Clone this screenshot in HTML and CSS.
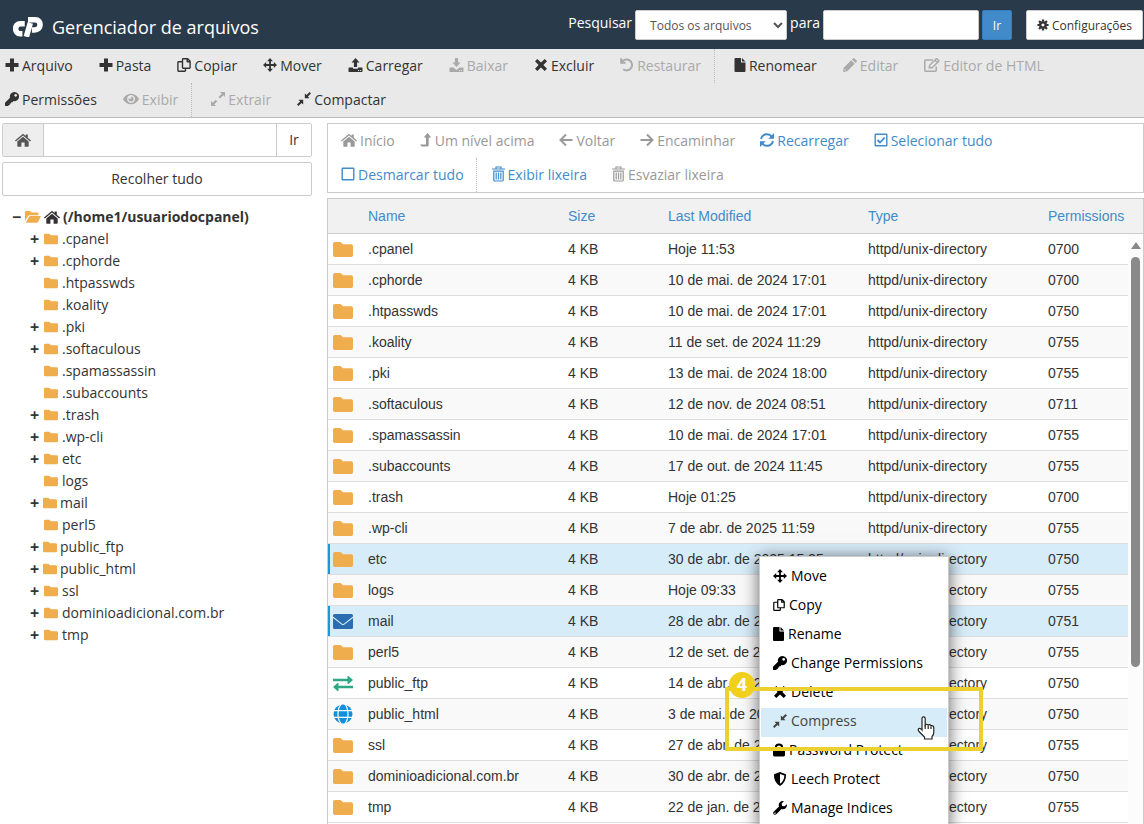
FILE: index.html
```html
<!DOCTYPE html>
<html lang="pt-BR">
<head>
<meta charset="UTF-8">
<meta name="viewport" content="width=device-width, initial-scale=1.0">
<title>Gerenciador de arquivos</title>
<link rel="stylesheet" href="styles.css">
</head>
<body>
<svg class="sprite" aria-hidden="true">
  <symbol id="plus" viewBox="0 0 14 14"><path d="M5 .5h4V5h4.500v4H9v4.500H5V9H.5V5H5z"/></symbol>
  <symbol id="copy" viewBox="0 0 14 14"><path fill="none" stroke="currentColor" stroke-width="1.400" stroke-linejoin="round" d="M7.500.8h3.200l2.400 2.400v6.300q0 .7-.7.700H6.200q-.7 0-.7-.7V1.500Q5.500.8 6.200.8zM10.200.9v2.800H13M5.200 3.800H1.600q-.7 0-.7.700v8q0 .7.700.700h6.200q.7 0 .7-.7v-2"/></symbol>
  <symbol id="move" viewBox="0 0 14 14"><path d="M7 0l2.900 3.200H7.900v2.900h2.900V4.100L14 7l-3.200 2.900V7.900H7.900v2.900h2L7 14l-2.900-3.200h2V7.900H3.200v2L0 7l3.200-2.900v2h2.900V3.200h-2z"/></symbol>
  <symbol id="upload" viewBox="0 0 14 14"><path d="M7 0l4 4.400H8.600V9H5.400V4.400H3zM0 10.200q0-.7.700-.7h3.700v.6q0 .7.700.7h3.800q.7 0 .7-.7v-.6h3.700q.7 0 .7.700v3.100q0 .7-.7.700H.7q-.7 0-.7-.7zM9.600 12v1h1v-1zm2 0v1h1v-1z"/></symbol>
  <symbol id="download" viewBox="0 0 14 14"><path d="M5.400 0h3.200v4.500H11L7 9 3 4.500h2.400zM0 10.200q0-.7.700-.7h3.200L7 12l3.100-2.500h3.200q.7 0 .7.700v3.100q0 .7-.7.700H.7q-.7 0-.7-.7zM9.600 12v1h1v-1zm2 0v1h1v-1z"/></symbol>
  <symbol id="times" viewBox="0 0 14 14"><path d="M1 3.300L3.300 1 7 4.600 10.700 1 13 3.300 9.400 7l3.600 3.700-2.300 2.300L7 9.400 3.300 13 1 10.700 4.600 7z"/></symbol>
  <symbol id="undo" viewBox="0 0 14 14"><path fill="none" stroke="currentColor" stroke-width="2" d="M1.200.3v4.400h4.400M1.600 4.500A5.500 5.500 0 1 1 3.200 11.300"/></symbol>
  <symbol id="file" viewBox="0 0 11 14"><path d="M1 0h5.500v4.500H11V13q0 1-1 1H1q-1 0-1-1V1q0-1 1-1zm6.500 0l3.500 3.500H7.500z"/></symbol>
  <symbol id="pencil" viewBox="0 0 14 14"><path d="M8.200 2.200l3.600 3.600-7.600 7.500L0 14l.7-4.200zM9 1.400L10 .4q.8-.7 1.600 0l2 2q.7.8 0 1.600l-1 1zM1.700 10.900l-.3 1.700 1.700-.3z"/></symbol>
  <symbol id="edit" viewBox="0 0 16 14"><path fill="none" stroke="currentColor" stroke-width="1.500" d="M9 2H1.800q-1 0-1 1v9.300q0 1 1 1h9.400q1 0 1-1V8.500M5.300 9.700l.4-2.400L12 1q.6-.5 1.200 0l1.300 1.300q.5.600 0 1.200L8.100 9.700zM11 2.300l2.500 2.500"/></symbol>
  <symbol id="key" viewBox="0 0 14 14"><path fill-rule="evenodd" d="M9.400 0a4.600 4.600 0 1 1-.9 9.100l-1 1.100H6.200v1.400H4.800V13H3.500v1H.6q-.6 0-.6-.6v-2.600l5-5A4.600 4.600 0 0 1 9.400 0zm1.200 2a1.400 1.400 0 1 0 .1 0z"/></symbol>
  <symbol id="eye" viewBox="0 0 16 14"><path fill-rule="evenodd" d="M8 1.700c3.600 0 6.500 2.200 8 5.300-1.500 3.100-4.400 5.300-8 5.300S1.500 10.100 0 7c1.500-3.100 4.400-5.300 8-5.300zm0 1.400a3.900 3.900 0 1 0 .1 0zM8 4.500a2.500 2.500 0 1 1-2.400 1.800A1.300 1.300 0 0 0 8 4.500z"/></symbol>
  <symbol id="expand" viewBox="0 0 14 14"><path d="M9 0h5v5l-1.700-1.700-3.200 3.200-1.600-1.600 3.200-3.200zM5 14H0V9l1.700 1.700 3-3 1.600 1.600-3 3z"/></symbol>
  <symbol id="compress" viewBox="0 0 14 14"><path d="M7.800 6.200V1.500l1.700 1.600L12.600 0 14 1.400l-3.100 3.100 1.600 1.700zM6.200 7.800v4.700l-1.700-1.600L1.400 14 0 12.600l3.100-3.100-1.600-1.700z"/></symbol>
  <symbol id="home" viewBox="0 0 16 14"><path d="M8 .7l2.600 2.200V1.500h2.200v3.200L16 7.500l-.9 1L8 2.500l-7.100 6-.9-1zM8 3.700l5.700 4.800V13q0 .7-.7.700H9.600V9.500H6.400v4.200H3q-.7 0-.7-.7V8.500z"/></symbol>
  <symbol id="gear" viewBox="0 0 14 14"><path fill="none" stroke="currentColor" stroke-width="3" d="M7 3.700a3.300 3.300 0 1 1-.1 0z"/><path fill="none" stroke="currentColor" stroke-width="2.600" d="M7 .5v2.200M7 11.300v2.200M.5 7h2.200M11.300 7h2.200M2.400 2.400L4 4M10 10l1.600 1.600M2.400 11.600L4 10M10 4l1.600-1.600"/></symbol>
  <symbol id="level-up" viewBox="0 0 12 14"><path d="M7.500 0l3.800 4.400H8.700V12q0 1.500-1.500 1.500H1.500L0 11.500h6V4.400H3.700z"/></symbol>
  <symbol id="left" viewBox="0 0 14 14"><path fill="none" stroke="currentColor" stroke-width="2" d="M13.500 7H2M7 1.500L1.500 7 7 12.500"/></symbol>
  <symbol id="right" viewBox="0 0 14 14"><path fill="none" stroke="currentColor" stroke-width="2" d="M.5 7H12M7 1.500L12.500 7 7 12.500"/></symbol>
  <symbol id="refresh" viewBox="0 0 14 14"><path fill="none" stroke="currentColor" stroke-width="2" d="M1 6a6 6 0 0 1 10.800-2.200M13 8a6 6 0 0 1-10.800 2.200"/><path d="M14 0v5.800H8.300zM0 14V8.200h5.700z"/></symbol>
  <symbol id="check" viewBox="0 0 14 14"><path fill="none" stroke="currentColor" stroke-width="1.400" d="M1.800 1.200h10.400q.6 0 .6.600v10.400q0 .6-.6.600H1.800q-.6 0-.6-.6V1.800q0-.6.600-.6z"/><path fill="none" stroke="currentColor" stroke-width="1.800" d="M3.500 7l2.500 2.500 4.700-5"/></symbol>
  <symbol id="square" viewBox="0 0 14 14"><path fill="none" stroke="currentColor" stroke-width="1.400" d="M1.800 1.200h10.400q.6 0 .6.600v10.400q0 .6-.6.600H1.800q-.6 0-.6-.6V1.800q0-.6.600-.6z"/></symbol>
  <symbol id="trash" viewBox="0 0 13 16"><path fill="none" stroke="currentColor" stroke-width="1.200" d="M0 3h13M4 3V1h5v2M1.800 5.200h9.400V14q0 1-1 1H2.800q-1 0-1-1zM4.200 6.500v7M6.500 6.500v7M8.800 6.500v7"/></symbol>
  <symbol id="folder" viewBox="0 0 20 15"><path d="M1.800 0h5.700l2.500 2.200h8.200Q20 2.200 20 4v9.200q0 1.800-1.800 1.800H1.800Q0 15 0 13.200V1.800Q0 0 1.800 0z"/></symbol>
  <symbol id="folder-open" viewBox="0 0 16 12"><path d="M1.200 0h4l1.600 1.600h5.400q1.200 0 1.200 1.200v1.400H4.600q-1 0-1.500.8L0 9.800V1.200Q0 0 1.200 0zM4.600 5H16l-3 6q-.5.800-1.300.800H.8z"/></symbol>
  <symbol id="envelope" viewBox="0 0 20 15"><path d="M1.500 0h17Q20 0 20 1.500v1L10.800 9.700q-.8.600-1.600 0L0 2.500v-1Q0 0 1.500 0zM0 4l8.500 6.600q1.500 1 3 0L20 4v9.500q0 1.500-1.500 1.500h-17Q0 15 0 13.500z"/></symbol>
  <symbol id="exchange" viewBox="0 0 20 15"><path d="M0 2.700h14.500V0h1L20 4l-4.500 4h-1V5.200H0zM20 9.800H5.500V7h-1L0 11l4.500 4h1v-2.700H20z"/></symbol>
  <symbol id="globe" viewBox="0 0 20 20"><circle cx="10" cy="10" r="9.500"/><path fill="none" stroke="#fff" stroke-width="1.200" d="M0 6.700h20M0 13.300h20M8 .3C4 5 4 15 8 19.700M12 .3C16 5 16 15 12 19.700"/></symbol>
  <symbol id="lock" viewBox="0 0 13 14"><path fill-rule="evenodd" d="M1.700 6H2V4.300a4.500 4.300 0 0 1 9 0V6h.3Q13 6 13 7.500v5q0 1.500-1.500 1.500h-10Q0 14 0 12.500v-5Q0 6 1.700 6zm2.500 0h4.600V4.300a2.300 2.200 0 0 0-4.600 0z"/></symbol>
  <symbol id="shield" viewBox="0 0 14 14"><path fill-rule="evenodd" d="M7 0l6 2.300q.4 8-6 11.700Q.6 10.300 1 2.300zm0 2v9.800Q11.300 9 11.300 3.600z"/></symbol>
  <symbol id="wrench" viewBox="0 0 14 14"><path fill-rule="evenodd" d="M13.800 3.200A4 4 0 0 1 8.600 8L3.300 13.300A1.850 1.850 0 0 1 .7 10.700L6 5.400A4 4 0 0 1 10.900.2L8.700 2.500l.3 2.400 2.500.3zM1.900 11.500a.7.7 0 1 0 .1 0z"/></symbol>
</svg>

<header class="header">
  <h1 class="brand">
    <svg class="logo" viewBox="0 0 92 60" aria-hidden="true"><path d="M36 20H23C13 20 8 27 8 35S14 51 21 51H29"/><path d="M41 60L53 18M46 8H68C79 8 83 15 83 23S77 39 66 39H58"/></svg>
    Gerenciador de arquivos
  </h1>
  <form class="search">
    <label for="scope">Pesquisar</label>
    <select id="scope" class="field scope"><option>Todos os arquivos</option></select>
    <label for="query">para</label>
    <input type="text" id="query" class="field query">
    <button type="button" class="btn-go">Ir</button>
    <button type="button" class="field settings"><svg class="icon-sm"><use href="#gear"/></svg>Configurações</button>
  </form>
</header>

<nav class="toolbar actions">
  <button><svg><use href="#plus"/></svg>Arquivo</button>
  <button><svg><use href="#plus"/></svg>Pasta</button>
  <button><svg><use href="#copy"/></svg>Copiar</button>
  <button><svg><use href="#move"/></svg>Mover</button>
  <button><svg class="icon-lg"><use href="#upload"/></svg>Carregar</button>
  <button disabled><svg class="icon-lg"><use href="#download"/></svg>Baixar</button>
  <button><svg><use href="#times"/></svg>Excluir</button>
  <button disabled class="divider"><svg><use href="#undo"/></svg>Restaurar</button>
  <button><svg class="icon-sm"><use href="#file"/></svg>Renomear</button>
  <button disabled><svg><use href="#pencil"/></svg>Editar</button>
  <button disabled><svg class="icon-xl"><use href="#edit"/></svg>Editor de HTML</button>
  <button><svg><use href="#key"/></svg>Permissões</button>
  <button disabled class="divider"><svg class="icon-xl"><use href="#eye"/></svg>Exibir</button>
  <button disabled><svg><use href="#expand"/></svg>Extrair</button>
  <button><svg><use href="#compress"/></svg>Compactar</button>
</nav>

<main class="content">
  <aside class="sidebar">
    <form class="path">
      <button type="button" class="path-home" aria-label="Home"><svg class="icon-xl"><use href="#home"/></svg></button>
      <input type="text" class="path-input" aria-label="Path">
      <button type="button" class="path-go">Ir</button>
    </form>
    <button class="collapse">Recolher tudo</button>
    <ul class="tree">
      <li class="root"><span class="toggle">−</span><svg class="icon-xl folder"><use href="#folder-open"/></svg><svg class="icon-xl"><use href="#home"/></svg>(/home1/usuariodocpanel)</li>
      <li><span class="toggle">+</span><svg class="folder"><use href="#folder"/></svg>.cpanel</li>
      <li><span class="toggle">+</span><svg class="folder"><use href="#folder"/></svg>.cphorde</li>
      <li><span class="toggle"></span><svg class="folder"><use href="#folder"/></svg>.htpasswds</li>
      <li><span class="toggle"></span><svg class="folder"><use href="#folder"/></svg>.koality</li>
      <li><span class="toggle">+</span><svg class="folder"><use href="#folder"/></svg>.pki</li>
      <li><span class="toggle">+</span><svg class="folder"><use href="#folder"/></svg>.softaculous</li>
      <li><span class="toggle"></span><svg class="folder"><use href="#folder"/></svg>.spamassassin</li>
      <li><span class="toggle"></span><svg class="folder"><use href="#folder"/></svg>.subaccounts</li>
      <li><span class="toggle">+</span><svg class="folder"><use href="#folder"/></svg>.trash</li>
      <li><span class="toggle">+</span><svg class="folder"><use href="#folder"/></svg>.wp-cli</li>
      <li><span class="toggle">+</span><svg class="folder"><use href="#folder"/></svg>etc</li>
      <li><span class="toggle"></span><svg class="folder"><use href="#folder"/></svg>logs</li>
      <li class="special"><span class="toggle">+</span><svg class="folder"><use href="#folder"/></svg>mail</li>
      <li><span class="toggle"></span><svg class="folder"><use href="#folder"/></svg>perl5</li>
      <li class="special"><span class="toggle">+</span><svg class="folder"><use href="#folder"/></svg>public_ftp</li>
      <li class="special"><span class="toggle">+</span><svg class="folder"><use href="#folder"/></svg>public_html</li>
      <li><span class="toggle">+</span><svg class="folder"><use href="#folder"/></svg>ssl</li>
      <li><span class="toggle">+</span><svg class="folder"><use href="#folder"/></svg>dominioadicional.com.br</li>
      <li><span class="toggle">+</span><svg class="folder"><use href="#folder"/></svg>tmp</li>
    </ul>
  </aside>

  <section class="files">
    <nav class="toolbar nav">
      <button disabled><svg class="icon-xl"><use href="#home"/></svg>Início</button>
      <button disabled><svg class="icon-sm"><use href="#level-up"/></svg>Um nível acima</button>
      <button disabled><svg><use href="#left"/></svg>Voltar</button>
      <button disabled><svg><use href="#right"/></svg>Encaminhar</button>
      <button><svg><use href="#refresh"/></svg>Recarregar</button>
      <button><svg><use href="#check"/></svg>Selecionar tudo</button>
      <button class="divider"><svg><use href="#square"/></svg>Desmarcar tudo</button>
      <button><svg class="icon-tall"><use href="#trash"/></svg>Exibir lixeira</button>
      <button disabled><svg class="icon-tall"><use href="#trash"/></svg>Esvaziar lixeira</button>
    </nav>

    <div class="list">
      <div class="list-head">
        <table>
          <thead>
            <tr><th class="c-icon"></th><th>Name</th><th class="c-size">Size</th><th class="c-date">Last Modified</th><th class="c-type">Type</th><th class="c-perm">Permissions</th></tr>
          </thead>
        </table>
      </div>
      <div class="list-body">
        <table>
          <tbody>
            <tr><td class="c-icon"><svg class="folder"><use href="#folder"/></svg></td><td>.cpanel</td><td class="c-size">4 KB</td><td class="c-date">Hoje 11:53</td><td class="c-type">httpd/unix-directory</td><td class="c-perm">0700</td></tr>
            <tr><td><svg class="folder"><use href="#folder"/></svg></td><td>.cphorde</td><td>4 KB</td><td>10 de mai. de 2024 17:01</td><td>httpd/unix-directory</td><td>0700</td></tr>
            <tr><td><svg class="folder"><use href="#folder"/></svg></td><td>.htpasswds</td><td>4 KB</td><td>10 de mai. de 2024 17:01</td><td>httpd/unix-directory</td><td>0750</td></tr>
            <tr><td><svg class="folder"><use href="#folder"/></svg></td><td>.koality</td><td>4 KB</td><td>11 de set. de 2024 11:29</td><td>httpd/unix-directory</td><td>0755</td></tr>
            <tr><td><svg class="folder"><use href="#folder"/></svg></td><td>.pki</td><td>4 KB</td><td>13 de mai. de 2024 18:00</td><td>httpd/unix-directory</td><td>0755</td></tr>
            <tr><td><svg class="folder"><use href="#folder"/></svg></td><td>.softaculous</td><td>4 KB</td><td>12 de nov. de 2024 08:51</td><td>httpd/unix-directory</td><td>0711</td></tr>
            <tr><td><svg class="folder"><use href="#folder"/></svg></td><td>.spamassassin</td><td>4 KB</td><td>10 de mai. de 2024 17:01</td><td>httpd/unix-directory</td><td>0755</td></tr>
            <tr><td><svg class="folder"><use href="#folder"/></svg></td><td>.subaccounts</td><td>4 KB</td><td>17 de out. de 2024 11:45</td><td>httpd/unix-directory</td><td>0755</td></tr>
            <tr><td><svg class="folder"><use href="#folder"/></svg></td><td>.trash</td><td>4 KB</td><td>Hoje 01:25</td><td>httpd/unix-directory</td><td>0700</td></tr>
            <tr><td><svg class="folder"><use href="#folder"/></svg></td><td>.wp-cli</td><td>4 KB</td><td>7 de abr. de 2025 11:59</td><td>httpd/unix-directory</td><td>0755</td></tr>
            <tr class="selected"><td><svg class="folder"><use href="#folder"/></svg></td><td>etc</td><td>4 KB</td><td>30 de abr. de 2025 15:25</td><td>httpd/unix-directory</td><td>0750</td></tr>
            <tr><td><svg class="folder"><use href="#folder"/></svg></td><td>logs</td><td>4 KB</td><td>Hoje 09:33</td><td>httpd/unix-directory</td><td>0755</td></tr>
            <tr class="selected"><td><svg class="mail"><use href="#envelope"/></svg></td><td>mail</td><td>4 KB</td><td>28 de abr. de 2025</td><td>httpd/unix-directory</td><td>0751</td></tr>
            <tr><td><svg class="folder"><use href="#folder"/></svg></td><td>perl5</td><td>4 KB</td><td>12 de set. de 2024</td><td>httpd/unix-directory</td><td>0755</td></tr>
            <tr><td><svg class="ftp"><use href="#exchange"/></svg></td><td>public_ftp</td><td>4 KB</td><td>14 de abr. de 2025</td><td>httpd/unix-directory</td><td>0750</td></tr>
            <tr><td><svg class="web"><use href="#globe"/></svg></td><td>public_html</td><td>4 KB</td><td>3 de mai. de 2025</td><td>httpd/unix-directory</td><td>0750</td></tr>
            <tr><td><svg class="folder"><use href="#folder"/></svg></td><td>ssl</td><td>4 KB</td><td>27 de abr. de 2025</td><td>httpd/unix-directory</td><td>0755</td></tr>
            <tr><td><svg class="folder"><use href="#folder"/></svg></td><td>dominioadicional.com.br</td><td>4 KB</td><td>30 de abr. de 2025</td><td>httpd/unix-directory</td><td>0750</td></tr>
            <tr><td><svg class="folder"><use href="#folder"/></svg></td><td>tmp</td><td>4 KB</td><td>22 de jan. de 2025</td><td>httpd/unix-directory</td><td>0755</td></tr>
          </tbody>
        </table>
        <div class="scrollbar"><span class="scroll-up"></span><span class="scroll-thumb"></span></div>
      </div>
    </div>
  </section>
</main>

<div class="menu">
  <button><svg><use href="#move"/></svg>Move</button>
  <button><svg class="icon-sm"><use href="#copy"/></svg>Copy</button>
  <button><svg class="icon-xs"><use href="#file"/></svg>Rename</button>
  <button><svg><use href="#key"/></svg>Change Permissions</button>
  <button><svg><use href="#times"/></svg>Delete</button>
  <button class="active"><svg><use href="#compress"/></svg>Compress</button>
  <button><svg class="icon-sm"><use href="#lock"/></svg>Password Protect</button>
  <button><svg><use href="#shield"/></svg>Leech Protect</button>
  <button><svg><use href="#wrench"/></svg>Manage Indices</button>
</div>

<div class="highlight"><span class="step">4</span></div>
<svg class="pointer" viewBox="0 0 18 24" aria-hidden="true"><path d="M5 14V2.500a1.600 1.600 0 0 1 3.200 0V9q1.200-1.500 3 0 1.600-1 2.800.6 2.600-.4 2.800 2V16q0 3-1.800 4.600V23H7.500v-2L2 15.500q-1.600-2 0-3Q3.300 12 5 14z"/><path d="M8.200 9v4M11.200 9.500V13M14 10.200V13"/></svg>
</body>
</html>
```

FILE: styles.css
```css
* {
  box-sizing: border-box;
}
body {
  margin: 0;
  height: 100vh;
  display: flex;
  flex-direction: column;
  overflow: hidden;
  background: #fff;
  color: #333;
  font: 14px/20px 'Open Sans', sans-serif;
}
button, input, select {
  font-family: inherit;
  font-size: inherit;
  color: inherit;
}
button {
  cursor: pointer;
}
svg {
  width: 14px;
  height: 14px;
  flex-shrink: 0;
  fill: currentColor;
}
.sprite {
  display: none;
}
.icon-xs {
  width: 11px;
}
.icon-sm {
  width: 12px;
}
.icon-lg {
  width: 15px;
}
.icon-xl {
  width: 16px;
}
.icon-tall {
  width: 13px;
  height: 16px;
}
.folder {
  color: #f0ad4e;
}

/* header */
.header {
  display: flex;
  justify-content: space-between;
  align-items: flex-start;
  height: 49px;
  padding: 10px 1px 0 13px;
  background: #293a4a;
  color: #fff;
}
.brand {
  display: flex;
  align-items: center;
  gap: 9px;
  margin: 0;
  font-size: 18px;
  font-weight: 400;
  line-height: 34px;
}
.logo {
  width: 30px;
  height: 20px;
  fill: none;
  stroke: #fff;
  stroke-width: 17px;
}
.search {
  display: flex;
  align-items: center;
  gap: 3px;
}
.search label {
  line-height: 26px;
  padding-bottom: 4px;
}
.field {
  height: 30px;
  border: 1px solid #ccc;
  border-radius: 2px;
  background: #fff;
  font-size: 12px;
}
.scope {
  width: 152px;
  padding: 0 0 0 10px;
  color: #555;
}
.query {
  width: 156px;
}
.btn-go {
  width: 30px;
  height: 30px;
  padding: 0;
  border: 1px solid #357ebd;
  border-radius: 2px;
  background: #428bca;
  color: #fff;
  font-size: 12px;
}
.settings {
  display: flex;
  align-items: center;
  gap: 3px;
  margin-left: 11px;
  padding: 0 10px;
  color: #333;
}

/* toolbars */
.toolbar {
  display: flex;
  flex-wrap: wrap;
}
.toolbar button {
  display: flex;
  align-items: center;
  gap: 3px;
  height: 34px;
  margin-right: 26px;
  padding: 0 0 2px;
  border: 0;
  background: none;
}
.toolbar button:disabled {
  color: #aaa;
  cursor: default;
}
.toolbar .divider {
  margin-right: 19px;
  padding-right: 13px;
  border-right: 1px dotted #bbb;
}
.actions {
  padding-left: 5px;
  background: #e9e9e9;
  border-bottom: 1px solid #bbb;
}
.nav {
  padding-left: 13px;
  border: 1px solid #ccc;
  color: #428bca;
}
.nav button {
  margin-right: 25px;
}
.nav .divider {
  margin-right: 15px;
  padding-right: 12px;
}
.nav button:disabled {
  color: #999;
}

.content {
  flex: 1;
  display: flex;
  gap: 15px;
  min-height: 0;
  padding: 5px 0 0 2px;
}

/* sidebar */
.sidebar {
  width: 310px;
}
.path {
  display: flex;
  height: 34px;
  margin-bottom: 5px;
  border: 1px solid #ccc;
  border-radius: 2px;
}
.path-home {
  width: 41px;
  border: 0;
  border-right: 1px solid #ccc;
  background: #eee;
  color: #555;
}
.path-home svg {
  display: block;
  margin: auto;
}
.path-input {
  flex: 1;
  min-width: 0;
  border: 0;
}
.path-go {
  width: 35px;
  padding-bottom: 2px;
  border: 0;
  border-left: 1px solid #ccc;
  background: #fff;
}
.collapse {
  width: 100%;
  height: 34px;
  padding-bottom: 3px;
  border: 1px solid #ccc;
  border-radius: 2px;
  background: #fff;
}
.tree {
  margin: 10px 0 0;
  padding: 0;
  list-style: none;
}
.tree li {
  display: flex;
  align-items: center;
  gap: 4px;
  height: 22px;
  padding-left: 28px;
}
.tree .root {
  gap: 3px;
  padding-left: 10px;
  font-weight: 700;
}
.tree .special {
  gap: 3px;
}
.toggle {
  width: 10px;
  font-size: 16px;
  font-weight: 700;
}

/* file list */
.files {
  flex: 1;
  display: flex;
  flex-direction: column;
  gap: 5px;
  min-width: 0;
}
.list {
  flex: 1;
  display: flex;
  flex-direction: column;
  min-height: 0;
  border: 1px solid #ccc;
  border-bottom: 0;
  font-family: 'Liberation Sans', Arial, sans-serif;
}
.list table {
  width: 100%;
  table-layout: fixed;
  border-spacing: 0;
}
.list-head {
  padding-right: 15px;
  background: #f1f1f1;
  border-bottom: 1px solid #ccc;
}
.list th {
  height: 34px;
  padding: 0 5px;
  color: #428bca;
  font-weight: 400;
  text-align: left;
}
.list-body {
  flex: 1;
  display: flex;
  align-items: flex-start;
  min-height: 0;
}
.list td {
  height: 31px;
  padding: 0 5px;
  border-bottom: 1px solid #ddd;
  white-space: nowrap;
}
.list tr:nth-child(even) td {
  background: #f9f9f9;
}
.list .selected td {
  background: #d7ecf9;
}
.list .selected td:first-child {
  box-shadow: inset 2px 0 #179bd7;
}
.list .c-icon {
  width: 35px;
}
.list .c-size {
  width: 100px;
}
.list .c-date {
  width: 200px;
}
.list .c-type {
  width: 180px;
}
.list .c-perm {
  width: 85px;
}
.list td svg {
  display: block;
  width: 20px;
  height: 15px;
}
.list td .web {
  height: 20px;
}
.mail {
  color: #2a6db0;
}
.ftp {
  color: #2fa884;
}
.web {
  color: #0f8fdc;
}
.scrollbar {
  flex: 0 0 15px;
  align-self: stretch;
  display: flex;
  flex-direction: column;
  align-items: center;
  gap: 8px;
  padding-top: 8px;
  background: #fcfcfc;
}
.scroll-up {
  border: 5px solid transparent;
  border-top: 0;
  border-bottom: 7px solid #888;
}
.scroll-thumb {
  width: 9px;
  height: 410px;
  border-radius: 5px;
  background: #8a8a8a;
}

/* context menu */
.menu {
  position: absolute;
  left: 759px;
  top: 556px;
  width: 190px;
  padding: 6px 1px;
  border: 1px solid #ccc;
  background: #fff;
  box-shadow: 0 2px 16px rgba(0, 0, 0, 0.6);
}
.menu button {
  display: flex;
  align-items: center;
  gap: 4px;
  width: 100%;
  height: 29px;
  padding: 0 0 4px 12px;
  border: 0;
  background: none;
  color: #000;
}
.menu .active {
  background: #d7ecf9;
  color: #444;
}

.highlight {
  position: absolute;
  left: 725px;
  top: 687px;
  width: 258px;
  height: 64px;
  border: 4px solid #ebd030;
}
.step {
  position: absolute;
  left: 0;
  top: -19px;
  width: 26px;
  height: 26px;
  border-radius: 50%;
  background: #f0d01c;
  color: #fff;
  font-size: 18px;
  font-weight: 700;
  line-height: 24px;
  text-align: center;
}
.pointer {
  position: absolute;
  left: 917px;
  top: 716px;
  width: 18px;
  height: 24px;
  fill: #fff;
  stroke: #222;
  stroke-width: 1.2px;
}
```
